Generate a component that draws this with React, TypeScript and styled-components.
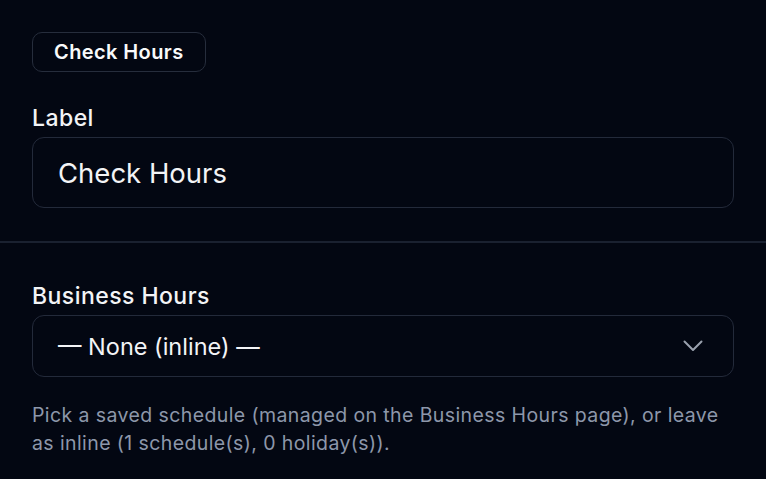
import React from "react";
import styled, { createGlobalStyle } from "styled-components";

const Global = createGlobalStyle`
  html, body { margin: 0; padding: 0; background: #030712; }
  body { font-family: Inter, "Noto Sans", sans-serif; color: #f3f4f6; -webkit-font-smoothing: antialiased; }
  * { box-sizing: border-box; }
`;

const Page = styled.div`
  width: 766px;
  height: 479px;
  background: #030712;
  overflow: hidden;
`;

const Section = styled.section<{ $top: number; $bottom: number }>`
  display: flex;
  flex-direction: column;
  padding: ${(p) => p.$top}px 32px ${(p) => p.$bottom}px;
`;

const Divider = styled.hr`
  margin: 0;
  border: 0;
  height: 2px;
  background: #1a2130;
`;

const Badge = styled.span`
  align-self: flex-start;
  height: 40px;
  display: inline-flex;
  align-items: center;
  padding: 0 21px;
  border: 1.5px solid #262d3c;
  border-radius: 10px;
  font-size: 20px;
  letter-spacing: 0.4px;
  font-weight: 600;
  color: #f9fafb;
  margin-bottom: 32px;
`;

const FieldLabel = styled.label`
  font-size: 23px;
  line-height: 28px;
  letter-spacing: 0.45px;
  font-weight: 500;
  color: #f3f4f6;
  margin-bottom: 5px;
`;

const Box = styled.div<{ $h: number; $size: number }>`
  height: ${(p) => p.$h}px;
  border: 1.5px solid #232a3a;
  border-radius: 12px;
  display: flex;
  align-items: center;
  justify-content: space-between;
  padding: 0 30px 0 25px;
  font-size: ${(p) => p.$size}px;
  color: #f3f4f6;
`;

const Help = styled.p`
  margin: 25px 0 0;
  font-size: 19.5px;
  line-height: 27.5px;
  letter-spacing: 0.4px;
  color: #8d97aa;
`;

const Chevron = () => (
  <svg width="20" height="12" viewBox="0 0 20 12" fill="none">
    <path d="M1.5 1.5 L10 10 L18.5 1.5" stroke="#9aa1ae" strokeWidth="2" strokeLinecap="round" strokeLinejoin="round" />
  </svg>
);

export default function App() {
  return (
    <Page>
      <Global />
      <Section $top={32} $bottom={33}>
        <Badge>Check Hours</Badge>
        <FieldLabel>Label</FieldLabel>
        <Box $h={71} $size={27.5}>Check Hours</Box>
      </Section>
      <Divider />
      <Section $top={39} $bottom={0}>
        <FieldLabel>Business Hours</FieldLabel>
        <Box $h={62} $size={23.5}>
          <span>— None (inline) —</span>
          <Chevron />
        </Box>
        <Help>
          Pick a saved schedule (managed on the Business Hours page), or leave as inline (1 schedule(s), 0 holiday(s)).
        </Help>
      </Section>
    </Page>
  );
}
